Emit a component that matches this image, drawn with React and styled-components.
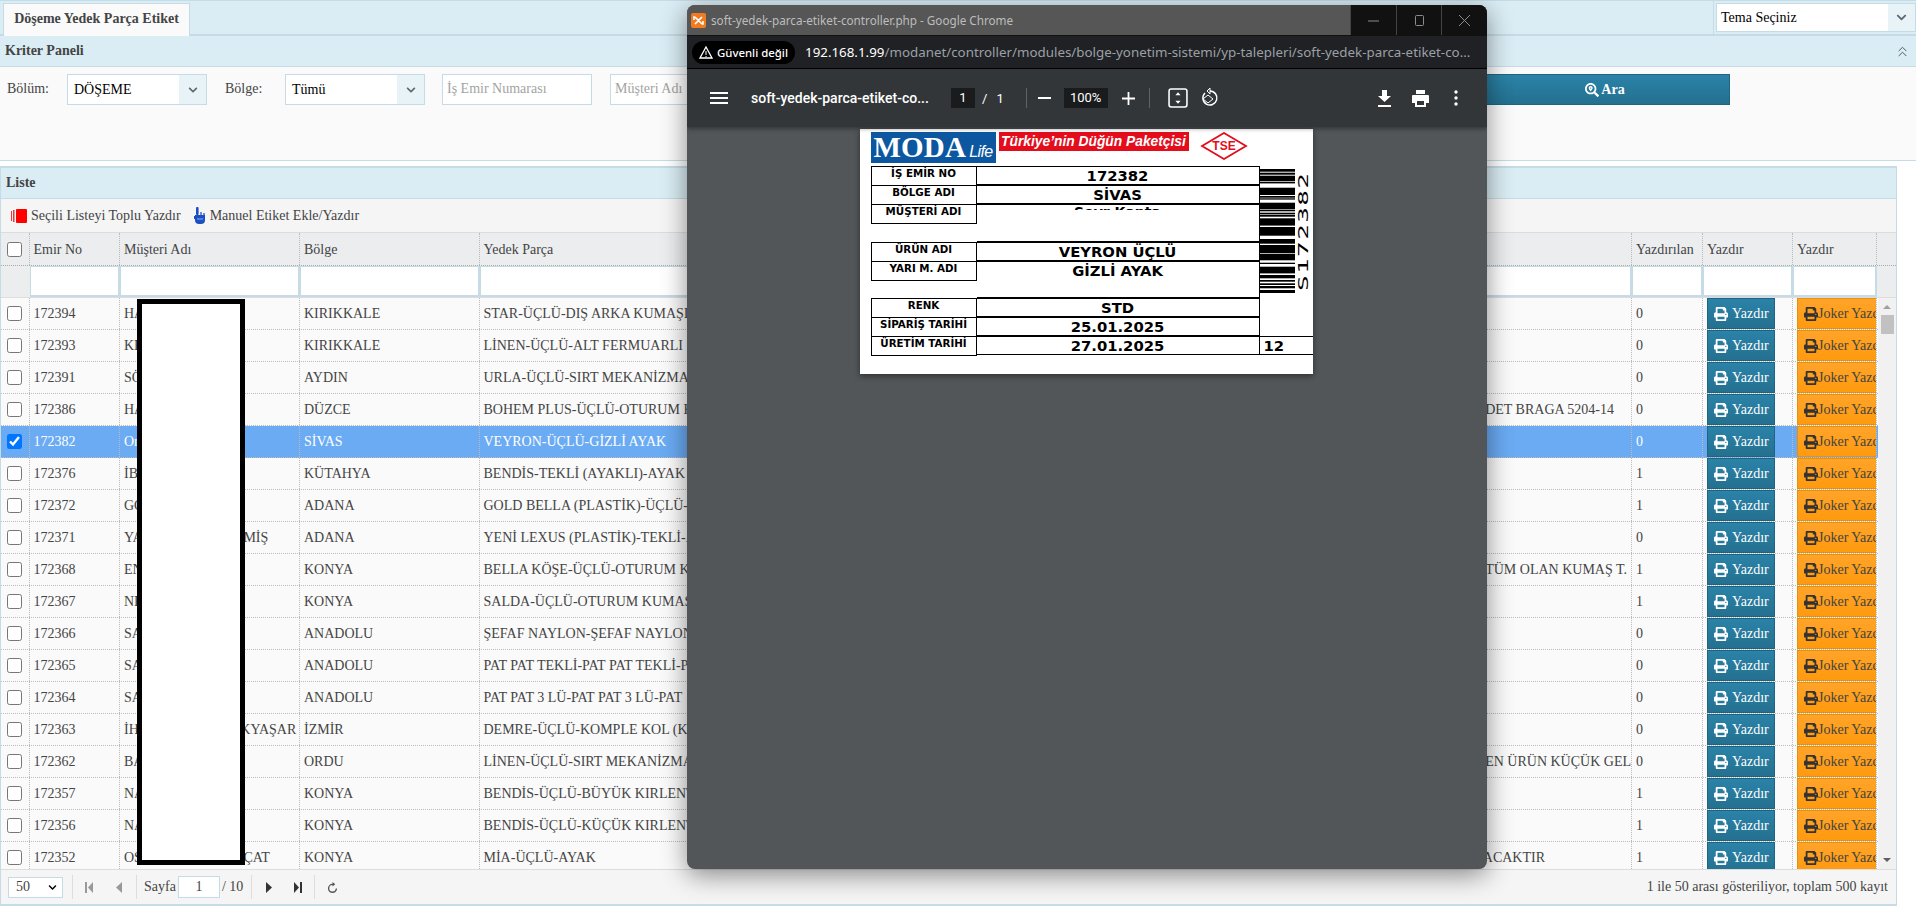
import React from 'react';
import styled, { createGlobalStyle } from 'styled-components';
import { FaPrint, FaSearchLocation, FaChevronDown } from 'react-icons/fa';
import { ChevronsUp } from 'lucide-react';

const Global = createGlobalStyle`
  html, body { margin: 0; padding: 0; height: 906px; overflow: hidden; background: #fff; }
  * { box-sizing: border-box; }
  body { font: 14px "Liberation Serif", "Times New Roman", serif; color: #444; }
`;

const gap = ' '.repeat(29);

const rows = [
  ['172394', 'HA', 'KIRIKKALE', 'STAR-ÜÇLÜ-DIŞ ARKA KUMAŞI', '', 0, '0'],
  ['172393', 'KE', 'KIRIKKALE', 'LİNEN-ÜÇLÜ-ALT FERMUARLI', '', 0, '0'],
  ['172391', 'SÖ', 'AYDIN', 'URLA-ÜÇLÜ-SIRT MEKANİZMASI', '', 0, '0'],
  ['172386', 'HA', 'DÜZCE', 'BOHEM PLUS-ÜÇLÜ-OTURUM KUMAŞI', 'DET BRAGA 5204-14', 17, '0'],
  ['172382', 'Or', 'SİVAS', 'VEYRON-ÜÇLÜ-GİZLİ AYAK', '', 0, '0'],
  ['172376', 'İB', 'KÜTAHYA', 'BENDİS-TEKLİ (AYAKLI)-AYAK', '', 0, '1'],
  ['172372', 'GÖ', 'ADANA', 'GOLD BELLA (PLASTİK)-ÜÇLÜ-AYAK', '', 0, '1'],
  ['172371', 'YA' + gap + 'MİŞ', 'ADANA', 'YENİ LEXUS (PLASTİK)-TEKLİ-AYAK', '', 0, '0'],
  ['172368', 'EN', 'KONYA', 'BELLA KÖŞE-ÜÇLÜ-OTURUM KUMAŞI', 'TÜM OLAN KUMAŞ T.', 4, '1'],
  ['172367', 'NE', 'KONYA', 'SALDA-ÜÇLÜ-OTURUM KUMAŞI', '', 0, '1'],
  ['172366', 'SA', 'ANADOLU', 'ŞEFAF NAYLON-ŞEFAF NAYLON', '', 0, '0'],
  ['172365', 'SA', 'ANADOLU', 'PAT PAT TEKLİ-PAT PAT TEKLİ-PAT', '', 0, '0'],
  ['172364', 'SA', 'ANADOLU', 'PAT PAT 3 LÜ-PAT PAT 3 LÜ-PAT', '', 0, '0'],
  ['172363', 'İH' + gap + 'KYAŞAR', 'İZMİR', 'DEMRE-ÜÇLÜ-KOMPLE KOL (KOL)', '', 0, '0'],
  ['172362', 'BA', 'ORDU', 'LİNEN-ÜÇLÜ-SIRT MEKANİZMASI', 'LEN ÜRÜN KÜÇÜK GEL', 0, '0'],
  ['172357', 'NA', 'KONYA', 'BENDİS-ÜÇLÜ-BÜYÜK KIRLENT', '', 0, '1'],
  ['172356', 'NA', 'KONYA', 'BENDİS-ÜÇLÜ-KÜÇÜK KIRLENT', '', 0, '1'],
  ['172352', 'OS' + gap + 'ÇAT', 'KONYA', 'MİA-ÜÇLÜ-AYAK', 'ACAKTIR', 86, '1'],
];

const cols = '28.5px 90.5px 180px 179.5px 1152.5px 71px 90px 84px 1fr';

const Page = styled.div`
  width: 1916px;
  height: 906px;
  position: relative;
  overflow: hidden;
`;

const TabBar = styled.div`
  height: 36px;
  background: #daedf4;
  border-top: 1px solid #c5dbe5;
  border-bottom: 2px solid #c5dbe5;
  display: flex;
  justify-content: space-between;
  padding-left: 3px;
`;

const Tab = styled.div`
  width: 187px;
  height: 33px;
  margin-top: 2px;
  background: #fafafa;
  border: 1px solid #c5dbe5;
  border-bottom: 0;
  font-weight: bold;
  text-align: center;
  line-height: 30px;
  color: #444;
`;

const ThemeWrap = styled.div`
  width: 203px;
  border-left: 1px solid #c5dbe5;
  padding: 2px 1px 1px 2px;
`;

const Select = styled.div`
  width: ${(p) => p.$w}px;
  height: ${(p) => p.$h}px;
  background: #fff;
  border: 1px solid #c5dbe5;
  display: flex;
  align-items: center;
  justify-content: space-between;
  padding-left: ${(p) => p.$pl || 4}px;
  color: #000;
  flex: none;
  & > i {
    width: 27px;
    height: 100%;
    background: #e8f3f7;
    display: flex;
    align-items: center;
    justify-content: center;
    color: #5c6870;
  }
`;

const PanelHead = styled.div`
  height: ${(p) => p.$h}px;
  flex: none;
  background: #daedf4;
  border-bottom: 1px solid #c5dbe5;
  display: flex;
  align-items: center;
  justify-content: space-between;
  font-weight: bold;
  padding: 0 5px;
  color: #444;
`;

const FilterBody = styled.div`
  height: 94px;
  background: #fafafa;
  border-bottom: 1px solid #c5dbe5;
  padding: 7px 0 0 7px;
  display: flex;
  align-items: flex-start;
`;

const FieldLabel = styled.span`
  width: ${(p) => p.$w}px;
  padding-left: ${(p) => p.$pl || 0}px;
  line-height: 30px;
  flex: none;
  color: #444;
`;

const TextInput = styled.div`
  width: ${(p) => p.$w}px;
  height: 31px;
  margin: 0 ${(p) => p.$mr}px 0 ${(p) => p.$ml || 0}px;
  background: #fff;
  border: 1px solid #c5dbe5;
  color: #a3a3a3;
  line-height: 28px;
  padding-left: 4px;
  flex: none;
`;

const SearchButton = styled.div`
  width: 254px;
  height: 31px;
  background: linear-gradient(#2a83a8, #24708f);
  border: 1px solid #1f6480;
  color: #fff;
  font-weight: bold;
  display: flex;
  align-items: center;
  justify-content: center;
  gap: 2px;
  padding-left: 4px;
`;

const ListPanel = styled.div`
  margin-top: 5px;
  width: 1897px;
  height: 740px;
  border: 1px solid #c5dbe5;
  border-top-width: 2px;
  border-bottom-width: 2px;
  display: flex;
  flex-direction: column;
  background: #fafafa;
`;

const Toolbar = styled.div`
  height: 34px;
  flex: none;
  background: #f5f5f5;
  border-bottom: 1px solid #ddd;
  display: flex;
  align-items: center;
  padding-left: 10px;
  gap: 13px;
  color: #444;
  & > span { display: flex; align-items: center; gap: 4px; }
`;

const Row = styled.div`
  display: grid;
  grid-template-columns: ${cols};
  height: ${(p) => p.$h || 32}px;
  flex: none;
  background: ${(p) => (p.$active ? '#6aabf3' : 'transparent')};
  color: ${(p) => (p.$active ? '#fff' : '#444')};
  border-bottom: 1px dotted #bbb;
`;

const HeadRow = styled(Row)`
  background: #ebedef;
  height: 33px;
  border-bottom: 1px dotted #aaa;
`;

const FilterRow = styled(Row)`
  background: #ebedef;
  height: 32px;
  border-bottom: 1px solid #ddd;
`;

const Cell = styled.div`
  border-right: 1px dotted #bbb;
  padding: 0 4px;
  line-height: 31px;
  white-space: pre;
  overflow: hidden;
  display: flex;
  align-items: center;
  &:last-child { border-right: 0; }
`;

const NoteCell = styled(Cell)`
  padding-right: ${(p) => p.$pr}px;
  & > span { margin-right: auto; }
`;

const CheckCell = styled(Cell)`
  padding: 0;
  justify-content: center;
`;

const ButtonCell = styled(Cell)`
  padding: 0 0 0 4px;
`;

const FilterInput = styled.div`
  background: #fff;
  border: 1px solid #c5dbe5;
  border-width: 1px 2px 2px 1px;
`;

const Check = styled.input.attrs({ type: 'checkbox' })`
  width: 15px;
  height: 15px;
  margin: 0;
  accent-color: #0075ff;
`;

const Body = styled.div`
  flex: 1;
  min-height: 0;
  overflow: hidden;
  position: relative;
`;

const PrintButton = styled.div`
  height: 31px;
  width: ${(p) => p.$w}px;
  flex: none;
  display: flex;
  align-items: center;
  white-space: nowrap;
  overflow: hidden;
  gap: ${(p) => (p.$joker ? 0 : 4)}px;
  padding-left: 6px;
  background: ${(p) =>
    p.$joker ? 'linear-gradient(#ffa42a, #ff9a0d)' : 'linear-gradient(#2a83a8, #24708f)'};
  border: 1px solid ${(p) => (p.$joker ? '#e8900a' : '#1f6480')};
  color: ${(p) => (p.$joker ? '#444' : '#fff')};
  & > svg { flex: none; width: 14px; height: 14px; }
`;

const Scrollbar = styled.div`
  position: absolute;
  right: 0;
  top: 0;
  bottom: 0;
  width: 18px;
  background: #f1f1f1;
  & > b {
    position: absolute;
    left: 3px;
    top: 17px;
    width: 13px;
    height: 19px;
    background: #c1c1c1;
  }
`;

const Arrow = styled.div`
  position: absolute;
  left: 5px;
  ${(p) => (p.$up ? 'top: 7px;' : 'bottom: 7px;')}
  width: 0;
  height: 0;
  border-left: 4px solid transparent;
  border-right: 4px solid transparent;
  ${(p) => (p.$up ? 'border-bottom: 4px solid #a0a0a0;' : 'border-top: 4px solid #606060;')}
`;

const Pager = styled.div`
  height: 35px;
  flex: none;
  background: #f5f5f5;
  border-top: 1px solid #ddd;
  display: flex;
  align-items: center;
  padding-left: 7px;
  color: #444;
`;

const PageSize = styled.div`
  width: 55px;
  height: 21px;
  background: #fff;
  border: 1px solid #c5dbe5;
  display: flex;
  align-items: center;
  justify-content: space-between;
  padding: 0 5px 0 7px;
`;

const Sep = styled.div`
  width: 1px;
  height: 24px;
  background: #ddd;
  margin-left: ${(p) => p.$l}px;
  flex: none;
`;

const PagerLabel = styled.span`
  margin-left: ${(p) => p.$l}px;
`;

const PageNum = styled.div`
  width: 42px;
  height: 22px;
  margin-left: 2px;
  background: #fff;
  border: 1px solid #c5dbe5;
  text-align: center;
  line-height: 20px;
`;

const PagerIcon = styled.svg`
  width: ${(p) => p.$w || 8}px;
  height: ${(p) => p.$w || 11}px;
  margin-left: ${(p) => p.$l}px;
  fill: ${(p) => p.$c};
  flex: none;
`;

const PagerInfo = styled.div`
  margin-left: auto;
  padding-right: 8px;
`;

const Redaction = styled.div`
  position: absolute;
  left: 137px;
  top: 299px;
  width: 108px;
  height: 566px;
  background: #fff;
  border: 5px solid #000;
`;

const Win = styled.div`
  position: absolute;
  left: 687px;
  top: 5px;
  width: 800px;
  height: 864px;
  border-radius: 8px;
  overflow: hidden;
  background: #525659;
  box-shadow: 0 6px 26px rgba(0, 0, 0, 0.45);
  display: flex;
  flex-direction: column;
  font-family: "Noto Sans", "Open Sans", sans-serif;
`;

const TitleBar = styled.div`
  height: 31px;
  flex: none;
  background: #565656;
  border-bottom: 1px solid #111;
  display: flex;
  align-items: center;
  padding-left: 4px;
  color: #bdbdbd;
  font-size: 11.7px;
`;

const TitleText = styled.span`
  margin-left: 5px;
  flex: 1;
`;

const WinButtons = styled.div`
  width: 137px;
  height: 100%;
  background: #111;
  display: flex;
  & > div {
    flex: 1;
    display: flex;
    align-items: center;
    justify-content: center;
    border-left: 1px solid #444;
    color: #8c8c8c;
  }
`;

const AddressBar = styled.div`
  height: 33px;
  flex: none;
  background: #202124;
  border-bottom: 1px solid #000;
  display: flex;
  align-items: center;
  padding-left: 5px;
  font-size: 13.35px;
  color: #9aa0a6;
  white-space: nowrap;
  overflow: hidden;
`;

const Secure = styled.div`
  height: 23px;
  width: 103px;
  flex: none;
  border-radius: 12px;
  background: #000;
  color: #fff;
  font-size: 11.4px;
  font-weight: 500;
  display: flex;
  align-items: center;
  justify-content: center;
  gap: 4px;
  margin-right: 10px;
`;

const Host = styled.span`
  color: #fff;
`;

const PdfBar = styled.div`
  height: 58px;
  flex: none;
  background: #323639;
  color: #fff;
  display: flex;
  align-items: center;
  padding-left: 23px;
  font-family: Roboto, "Noto Sans", sans-serif;
  font-size: 13px;
  box-shadow: 0 2px 4px rgba(0, 0, 0, 0.35);
  position: relative;
`;

const PdfName = styled.span`
  font-weight: 500;
  font-size: 14px;
  width: 199px;
  margin-left: 23px;
  flex: none;
`;

const PdfBox = styled.span`
  width: ${(p) => p.$w}px;
  height: 20px;
  line-height: 20px;
  background: #191b1c;
  text-align: center;
  margin-left: ${(p) => p.$l || 0}px;
  flex: none;
`;

const PdfText = styled.span`
  margin-left: ${(p) => p.$l}px;
`;

const PdfDivider = styled.span`
  width: 1px;
  height: 20px;
  background: #5f6368;
  margin-left: ${(p) => p.$l}px;
  flex: none;
`;

const PdfIcon = styled.svg`
  margin-left: ${(p) => p.$l}px;
  flex: none;
`;

const Viewer = styled.div`
  flex: 1;
  display: flex;
  justify-content: center;
  align-items: flex-start;
  padding: 2px 2px 0 0;
`;

const Sheet = styled.div`
  width: 453px;
  height: 245px;
  background: #fff;
  padding: 3px 0 0 11px;
  box-shadow: 0 2px 6px rgba(0, 0, 0, 0.45);
  font-family: "DejaVu Sans", sans-serif;
  color: #000;
  font-weight: bold;
  overflow: hidden;
`;

const Brand = styled.div`
  display: flex;
  height: 31px;
  align-items: flex-start;
`;

const ModaLogo = styled.div`
  width: 125px;
  height: 31px;
  background: #0d57a0;
  color: #fff;
  font-family: "Liberation Serif", serif;
  font-size: 29px;
  line-height: 31px;
  padding-left: 3px;
  letter-spacing: 0.2px;
  white-space: nowrap;
  overflow: hidden;
  & > em {
    font-family: "Liberation Sans", sans-serif;
    font-size: 16px;
    font-weight: normal;
    font-style: italic;
    letter-spacing: -0.6px;
    margin-left: 3px;
    color: #fff;
  }
`;

const Slogan = styled.div`
  width: 190px;
  height: 19px;
  margin: 0 11px 0 3px;
  background: #e30d1c;
  color: #fff;
  font: italic bold 13.8px "Liberation Sans", sans-serif;
  line-height: 19px;
  text-align: center;
  white-space: nowrap;
`;

const LabelGrid = styled.div`
  display: grid;
  grid-template-columns: 106px 283px 53px;
  grid-template-rows: 19px 19px 38px 19px 37px 19px 19px 19px;
  margin-top: 3px;
`;

const LabelKey = styled.div`
  border: 1px solid #000;
  height: 20px;
  font-size: 10.3px;
  text-align: center;
  line-height: 13px;
  background: #fff;
  white-space: nowrap;
`;

const LabelValue = styled.div`
  border: 1px solid #000;
  border-left: 0;
  font-size: 14.8px;
  text-align: center;
  line-height: 18px;
  overflow: hidden;
  white-space: nowrap;
`;

const Clipped = styled.div`
  height: 5px;
  overflow: hidden;
  line-height: 15px;
  font-size: 14px;
`;

const CodeArea = styled.div`
  grid-column: 3;
  grid-row: 1 / span 7;
  display: flex;
  padding-top: 3px;
`;

const CountCell = styled.div`
  border: 1px solid #000;
  border-left: 0;
  border-right: 0;
  font-size: 14.8px;
  line-height: 18px;
  padding-left: 4px;
`;

const Barcode = styled.svg`
  width: 35px;
  height: 124px;
  flex: none;
`;

const BarcodeText = styled.div`
  writing-mode: vertical-rl;
  transform: rotate(180deg) scaleX(0.55);
  font: normal 26px "DejaVu Sans Mono", monospace;
  letter-spacing: 1.4px;
  height: 124px;
  width: 16px;
  line-height: 16px;
  text-align: center;
  color: #000;
  white-space: nowrap;
`;

const bars = [
  [0, 2.7], [3.7, 2], [6.7, 5.3], [12.7, 1.7], [18.7, 7.3], [27, 1.7], [29.3, 1.3], [33.7, 6.7],
  [41, 1.3], [43.7, 1.7], [46, 1.7], [49.3, 7.3], [58, 8.7], [70, 4.7], [76, 8.3], [85, 6.3],
  [93.7, 1.3], [97.7, 6.7], [106, 3.3], [111, 1.7], [114.3, 1.7], [117, 2.3], [121, 3],
];

const BarLines = () => (
  <Barcode viewBox="0 0 35 124" preserveAspectRatio="none">
    {bars.map(([y, h]) => <rect key={y} x="0" y={y} width="35" height={h} fill="#000" />)}
  </Barcode>
);

const RedCards = () => (
  <svg width="16" height="16" viewBox="0 0 16 16">
    <rect x="0" y="3" width="1" height="10" fill="#e33" />
    <rect x="2" y="2" width="1.5" height="12" fill="#e33" />
    <rect x="5" y="1" width="11" height="14" rx="1" fill="#f00" />
  </svg>
);

const BlueHand = () => (
  <svg width="12" height="17" viewBox="0 0 12 17">
    <rect x="2" y="0" width="2.6" height="8" rx="1" fill="#1c4fc0" />
    <rect x="0" y="9" width="2" height="3" fill="#1c4fc0" />
    <rect x="6" y="5" width="2" height="3" fill="#6d8fd8" />
    <rect x="9" y="6" width="2" height="3" fill="#6d8fd8" />
    <path d="M1 8h10v5a4 4 0 0 1-4 4H5a4 4 0 0 1-4-4z" fill="#1c4fc0" />
    <path d="M3 12h6" stroke="#8fb0ee" />
  </svg>
);

const DataRow = ({ row, index }) => {
  const active = index === 4;
  return (
    <Row $active={active}>
      <CheckCell><Check checked={active} readOnly /></CheckCell>
      <Cell>{row[0]}</Cell>
      <Cell>{row[1]}</Cell>
      <Cell>{row[2]}</Cell>
      <NoteCell $pr={row[5]}><span>{row[3]}</span>{row[4]}</NoteCell>
      <Cell>{row[6]}</Cell>
      <ButtonCell><PrintButton $w={68}><FaPrint /> Yazdır</PrintButton></ButtonCell>
      <ButtonCell><PrintButton $joker $w={80}><FaPrint color="#333" />Joker Yazdır</PrintButton></ButtonCell>
      <div />
    </Row>
  );
};

export default function App() {
  return (
    <Page>
      <Global />
      <TabBar>
        <Tab>Döşeme Yedek Parça Etiket</Tab>
        <ThemeWrap>
          <Select $w={200} $h={29}>Tema Seçiniz<i><FaChevronDown size={11} /></i></Select>
        </ThemeWrap>
      </TabBar>
      <PanelHead $h={31}>
        Kriter Paneli
        <ChevronsUp size={17} strokeWidth={1.4} color="#556" />
      </PanelHead>
      <FilterBody>
        <FieldLabel $w={60}>Bölüm:</FieldLabel>
        <Select $w={140} $h={31} $pl={6}>DÖŞEME<i><FaChevronDown size={10} /></i></Select>
        <FieldLabel $w={78} $pl={18}>Bölge:</FieldLabel>
        <Select $w={140} $h={31} $pl={6}>Tümü<i><FaChevronDown size={10} /></i></Select>
        <TextInput $w={150} $ml={17} $mr={18}>İş Emir Numarası</TextInput>
        <TextInput $w={120} $mr={746}>Müşteri Adı</TextInput>
        <SearchButton><FaSearchLocation size={14} /> Ara</SearchButton>
      </FilterBody>
      <ListPanel>
        <PanelHead $h={31}>Liste</PanelHead>
        <Toolbar>
          <span><RedCards /> Seçili Listeyi Toplu Yazdır</span>
          <span><BlueHand /> Manuel Etiket Ekle/Yazdır</span>
        </Toolbar>
        <HeadRow>
          <CheckCell><Check readOnly /></CheckCell>
          <Cell>Emir No</Cell>
          <Cell>Müşteri Adı</Cell>
          <Cell>Bölge</Cell>
          <Cell>Yedek Parça</Cell>
          <Cell>Yazdırılan</Cell>
          <Cell>Yazdır</Cell>
          <Cell>Yazdır</Cell>
          <div />
        </HeadRow>
        <FilterRow>
          <div />
          <FilterInput /><FilterInput /><FilterInput /><FilterInput />
          <FilterInput /><FilterInput /><FilterInput />
          <div />
        </FilterRow>
        <Body>
          {rows.map((r, i) => <DataRow key={r[0]} row={r} index={i} />)}
          <Scrollbar><Arrow $up /><b /><Arrow /></Scrollbar>
        </Body>
        <Pager>
          <PageSize>50<FaChevronDown size={9} color="#000" /></PageSize>
          <Sep $l={9} />
          <PagerIcon $l={12} $c="#999" viewBox="0 0 8 11"><path d="M0 0h2v11H0zM8 0v11L3 5.500z" /></PagerIcon>
          <PagerIcon $l={22} $c="#999" viewBox="0 0 8 11"><path d="M7 0v11L1 5.500z" /></PagerIcon>
          <Sep $l={13} />
          <PagerLabel $l={7}>Sayfa</PagerLabel>
          <PageNum>1</PageNum>
          <PagerLabel $l={2}>/ 10</PagerLabel>
          <Sep $l={8} />
          <PagerIcon $l={13} $c="#333" viewBox="0 0 8 11"><path d="M1 0v11l6-5.500z" /></PagerIcon>
          <PagerIcon $l={21} $c="#333" viewBox="0 0 8 11"><path d="M0 0v11l5-5.500zM6 0h2v11H6z" /></PagerIcon>
          <Sep $l={12} />
          <PagerIcon $l={12} $w={11} $c="#555" viewBox="0 0 12 12"><path d="M6 2V0l3 2.500L6 5V3.300A3.500 3.500 0 1 0 9.500 7H11A5 5 0 1 1 6 2z" /></PagerIcon>
          <PagerInfo>1 ile 50 arası gösteriliyor, toplam 500 kayıt</PagerInfo>
        </Pager>
      </ListPanel>
      <Redaction />
      <Win>
        <TitleBar>
          <svg width="15" height="15" viewBox="0 0 15 15">
            <rect width="15" height="15" rx="2" fill="#f07b21" />
            <path d="M4 4l7 7M11 4l-7 7M4 4H3v3M11 11h1V8" stroke="#fff" strokeWidth="1.6" fill="none" />
          </svg>
          <TitleText>soft-yedek-parca-etiket-controller.php - Google Chrome</TitleText>
          <WinButtons>
            <div><svg width="11" height="11"><path d="M0 6h11" stroke="#8c8c8c" /></svg></div>
            <div><svg width="11" height="11"><rect x="1.500" y="0.500" width="8" height="10" rx="1" fill="none" stroke="#8c8c8c" /></svg></div>
            <div><svg width="11" height="11"><path d="M0 0l11 11M11 0L0 11" stroke="#8c8c8c" /></svg></div>
          </WinButtons>
        </TitleBar>
        <AddressBar>
          <Secure>
            <svg width="14" height="13" viewBox="0 0 14 13"><path d="M7 1l6 11H1z" fill="none" stroke="#fff" strokeWidth="1.300" /><path d="M7 5v4M7 10v1" stroke="#fff" /></svg>
            Güvenli değil
          </Secure>
          <Host>192.168.1.99</Host>/modanet/controller/modules/bolge-yonetim-sistemi/yp-talepleri/soft-yedek-parca-etiket-co...
        </AddressBar>
        <PdfBar>
          <svg width="18" height="12" viewBox="0 0 18 12"><path d="M0 1h18M0 6h18M0 11h18" stroke="#fff" strokeWidth="1.800" /></svg>
          <PdfName>soft-yedek-parca-etiket-co...</PdfName>
          <PdfBox $w={24} $l={1}>1</PdfBox>
          <PdfText $l={7}>/</PdfText>
          <PdfText $l={9}>1</PdfText>
          <PdfDivider $l={22} />
          <PdfIcon $l={11} width="13" height="2"><rect width="13" height="2" fill="#fff" /></PdfIcon>
          <PdfBox $w={44} $l={13}>100%</PdfBox>
          <PdfIcon $l={14} width="13" height="13"><path d="M6.500 0v13M0 6.500h13" stroke="#fff" strokeWidth="1.800" /></PdfIcon>
          <PdfDivider $l={14} />
          <PdfIcon $l={18} width="20" height="20" viewBox="0 0 19 19"><rect x="1" y="1" width="17" height="17" rx="2" fill="none" stroke="#fff" strokeWidth="1.500" /><path d="M9.500 4l2.500 3H7zM9.500 15L7 12h5z" fill="#fff" /></PdfIcon>
          <PdfIcon $l={13} width="19" height="20" viewBox="0 0 19 20"><path d="M9 3a7 7 0 1 1-5 2" fill="none" stroke="#fff" strokeWidth="1.500" /><path d="M9 0v6L6 3zM2 11l5-4 5 4-5 4z" fill="none" stroke="#fff" /></PdfIcon>
          <PdfIcon $l={158} width="13" height="17" viewBox="0 0 13 17"><path d="M4 0h5v6h4l-6.500 6L0 6h4zM0 15h13v2H0z" fill="#fff" /></PdfIcon>
          <PdfIcon $l={21} width="17" height="17" viewBox="0 0 17 17"><path d="M4 0h9v4H4zM1 5h15a1 1 0 0 1 1 1v7h-3v4H3v-4H0V6a1 1 0 0 1 1-1zM5 11v4h7v-4z" fill="#fff" fillRule="evenodd" /></PdfIcon>
          <PdfIcon $l={25} width="4" height="16" viewBox="0 0 4 16"><circle cx="2" cy="2" r="1.700" fill="#fff" /><circle cx="2" cy="8" r="1.700" fill="#fff" /><circle cx="2" cy="14" r="1.700" fill="#fff" /></PdfIcon>
        </PdfBar>
        <Viewer>
          <Sheet>
            <Brand>
              <ModaLogo>MODA<em>Life</em></ModaLogo>
              <Slogan>Türkiye’nin Düğün Paketçisi</Slogan>
              <svg width="48" height="28" viewBox="0 0 48 28">
                <path d="M24 1L46 14 24 27 2 14z" fill="none" stroke="#e30d1c" strokeWidth="1.800" />
                <text x="24" y="18" textAnchor="middle" fontSize="12" fontFamily="Liberation Sans" fontWeight="bold" fill="#e30d1c">TSE</text>
              </svg>
            </Brand>
            <LabelGrid>
              <LabelKey>İŞ EMİR NO</LabelKey><LabelValue>172382</LabelValue>
              <CodeArea><BarLines /><BarcodeText>S172382</BarcodeText></CodeArea>
              <LabelKey>BÖLGE ADI</LabelKey><LabelValue>SİVAS</LabelValue>
              <LabelKey>MÜŞTERİ ADI</LabelKey><LabelValue><Clipped>Sevr Kanta</Clipped></LabelValue>
              <LabelKey>ÜRÜN ADI</LabelKey><LabelValue>VEYRON ÜÇLÜ</LabelValue>
              <LabelKey>YARI M. ADI</LabelKey><LabelValue>GİZLİ AYAK</LabelValue>
              <LabelKey>RENK</LabelKey><LabelValue>STD</LabelValue>
              <LabelKey>SİPARİŞ TARİHİ</LabelKey><LabelValue>25.01.2025</LabelValue>
              <LabelKey>ÜRETİM TARİHİ</LabelKey><LabelValue>27.01.2025</LabelValue>
              <CountCell>12</CountCell>
            </LabelGrid>
          </Sheet>
        </Viewer>
      </Win>
    </Page>
  );
}
